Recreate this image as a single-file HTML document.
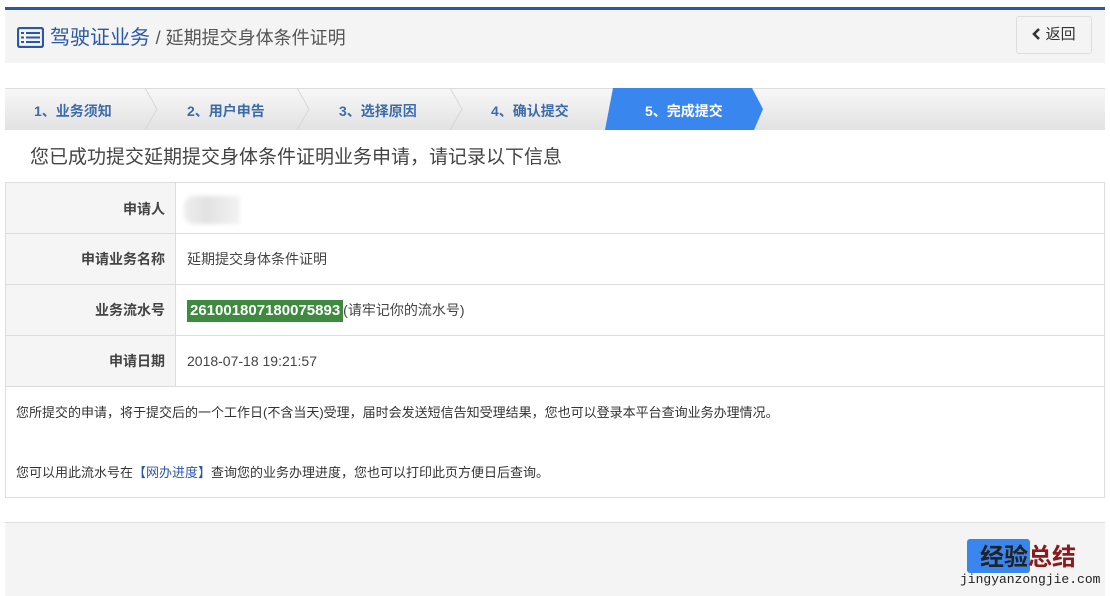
<!DOCTYPE html>
<html><head><meta charset="utf-8"><style>
*{margin:0;padding:0;box-sizing:border-box}
body{width:1110px;height:596px;background:#fff;font-family:"Liberation Sans","Noto Sans CJK SC",sans-serif;position:relative;overflow:hidden;color:#333}
.abs{position:absolute}
</style></head><body>
<div class="abs" style="left:5px;top:7px;width:1100px;height:3px;background:#2a58a8"></div>
<div class="abs" style="left:5px;top:10px;width:1100px;height:53px;background:#f4f4f4"></div>
<svg class="abs" style="left:17px;top:27px" width="27" height="21" viewBox="0 0 27 21"><rect x="1" y="1" width="25" height="19" rx="2" fill="none" stroke="#2a58a8" stroke-width="2.2"/><g fill="#2a58a8"><rect x="4" y="5" width="3" height="2"/><rect x="9" y="5" width="14" height="2"/><rect x="4" y="9.5" width="3" height="2"/><rect x="9" y="9.5" width="14" height="2"/><rect x="4" y="14" width="3" height="2"/><rect x="9" y="14" width="14" height="2"/></g></svg>
<div class="abs" style="left:50px;top:26px;font-size:20px;color:#2a58a8;line-height:24px">驾驶证业务 <span style="color:#555;font-size:18px">/ 延期提交身体条件证明</span></div>
<div class="abs" style="left:1016px;top:16px;width:76px;height:38px;border:1px solid #ddd;border-radius:3px;background:#f4f4f4;font-size:15px;line-height:36px;text-align:center;color:#333"><svg width="9" height="12" viewBox="0 0 9 12" style="vertical-align:-1px"><path d="M7 1 L2 6 L7 11" fill="none" stroke="#333" stroke-width="2.6"/></svg> 返回</div>

<div class="abs" style="left:5px;top:88px;width:1100px;height:42px;background:linear-gradient(#f7f7f7,#e2e2e2);border-top:1px solid #ddd"></div>
<svg class="abs" style="left:5px;top:88px" width="1100" height="42">
<g stroke="#d8d8d8" stroke-width="1" fill="none"><path d="M140 0 L152 21 L140 42"/><path d="M292 0 L304 21 L292 42"/><path d="M445 0 L457 21 L445 42"/></g>
<path d="M608 0 L747 0 L758 21 L749 42 L600 42 Z" fill="#3a86ef"/>
</svg>
<div class="abs" style="top:101px;font-size:14px;font-weight:bold;color:#3c6bab;left:0;width:1110px;height:20px;line-height:20px">
<span class="abs" style="left:34px">1、业务须知</span><span class="abs" style="left:187px">2、用户申告</span><span class="abs" style="left:339px">3、选择原因</span><span class="abs" style="left:491px">4、确认提交</span><span class="abs" style="left:645px;color:#fff">5、完成提交</span></div>

<div class="abs" style="left:30px;top:146px;font-size:19px;color:#444;line-height:24px">您已成功提交延期提交身体条件证明业务申请，请记录以下信息</div>

<div class="abs" style="left:5px;top:182px;width:1100px;height:316px;border:1px solid #ddd"></div>
<div class="abs" style="left:6px;top:183px;width:170px;height:203px;background:#f5f5f5;border-right:1px solid #ddd"></div>
<div class="abs" style="left:6px;top:233px;width:1098px;height:1px;background:#ddd"></div>
<div class="abs" style="left:6px;top:284px;width:1098px;height:1px;background:#ddd"></div>
<div class="abs" style="left:6px;top:335px;width:1098px;height:1px;background:#ddd"></div>
<div class="abs" style="left:6px;top:386px;width:1098px;height:1px;background:#ddd"></div>
<div class="abs" style="font-size:14px;font-weight:bold;color:#444;right:945px;text-align:right;top:199px;line-height:20px">申请人</div>
<div class="abs" style="font-size:14px;font-weight:bold;color:#444;right:945px;text-align:right;top:249px;line-height:20px">申请业务名称</div>
<div class="abs" style="font-size:14px;font-weight:bold;color:#444;right:945px;text-align:right;top:300px;line-height:20px">业务流水号</div>
<div class="abs" style="font-size:14px;font-weight:bold;color:#444;right:945px;text-align:right;top:351px;line-height:20px">申请日期</div>
<div class="abs" style="left:184px;top:196px;width:56px;height:28px;background:linear-gradient(90deg,#eee,#e2e2e2 40%,#f3f3f3);border-radius:10px 0 0 10px;filter:blur(2px)"></div>
<div class="abs" style="left:187px;top:249px;font-size:14px;color:#444;line-height:20px">延期提交身体条件证明</div>
<div class="abs" style="left:187px;top:300px;font-size:14px;color:#444;line-height:20px"><span style="background:#3e8a3f;color:#fff;font-weight:bold;padding:0 3px;font-size:15px;display:inline-block;line-height:22px">261001807180075893</span>(请牢记你的流水号)</div>
<div class="abs" style="left:187px;top:351px;font-size:14px;color:#444;line-height:20px">2018-07-18 19:21:57</div>
<div class="abs" style="left:16px;top:403px;font-size:13px;color:#333;line-height:20px">您所提交的申请，将于提交后的一个工作日(不含当天)受理，届时会发送短信告知受理结果，您也可以登录本平台查询业务办理情况。</div>
<div class="abs" style="left:16px;top:463px;font-size:13px;color:#333;line-height:20px">您可以用此流水号在<span style="color:#2a58a8">【网办进度】</span>查询您的业务办理进度，您也可以打印此页方便日后查询。</div>

<div class="abs" style="left:5px;top:522px;width:1100px;height:74px;background:#f4f4f4;border-top:1px solid #ddd"></div>
<div class="abs" style="left:967px;top:539px;width:63px;height:34px;background:#3a86ef;border-radius:3px"></div>
<div class="abs" style="left:980px;top:544px;font-size:24px;font-weight:bold;line-height:28px;color:#222">经验<span style="color:#8b1a1a">总结</span></div>
<div class="abs" style="left:960px;top:572px;font-size:13px;font-family:'Liberation Mono',monospace;color:#222;line-height:16px">jingyanzongjie.com</div>
</body></html>
